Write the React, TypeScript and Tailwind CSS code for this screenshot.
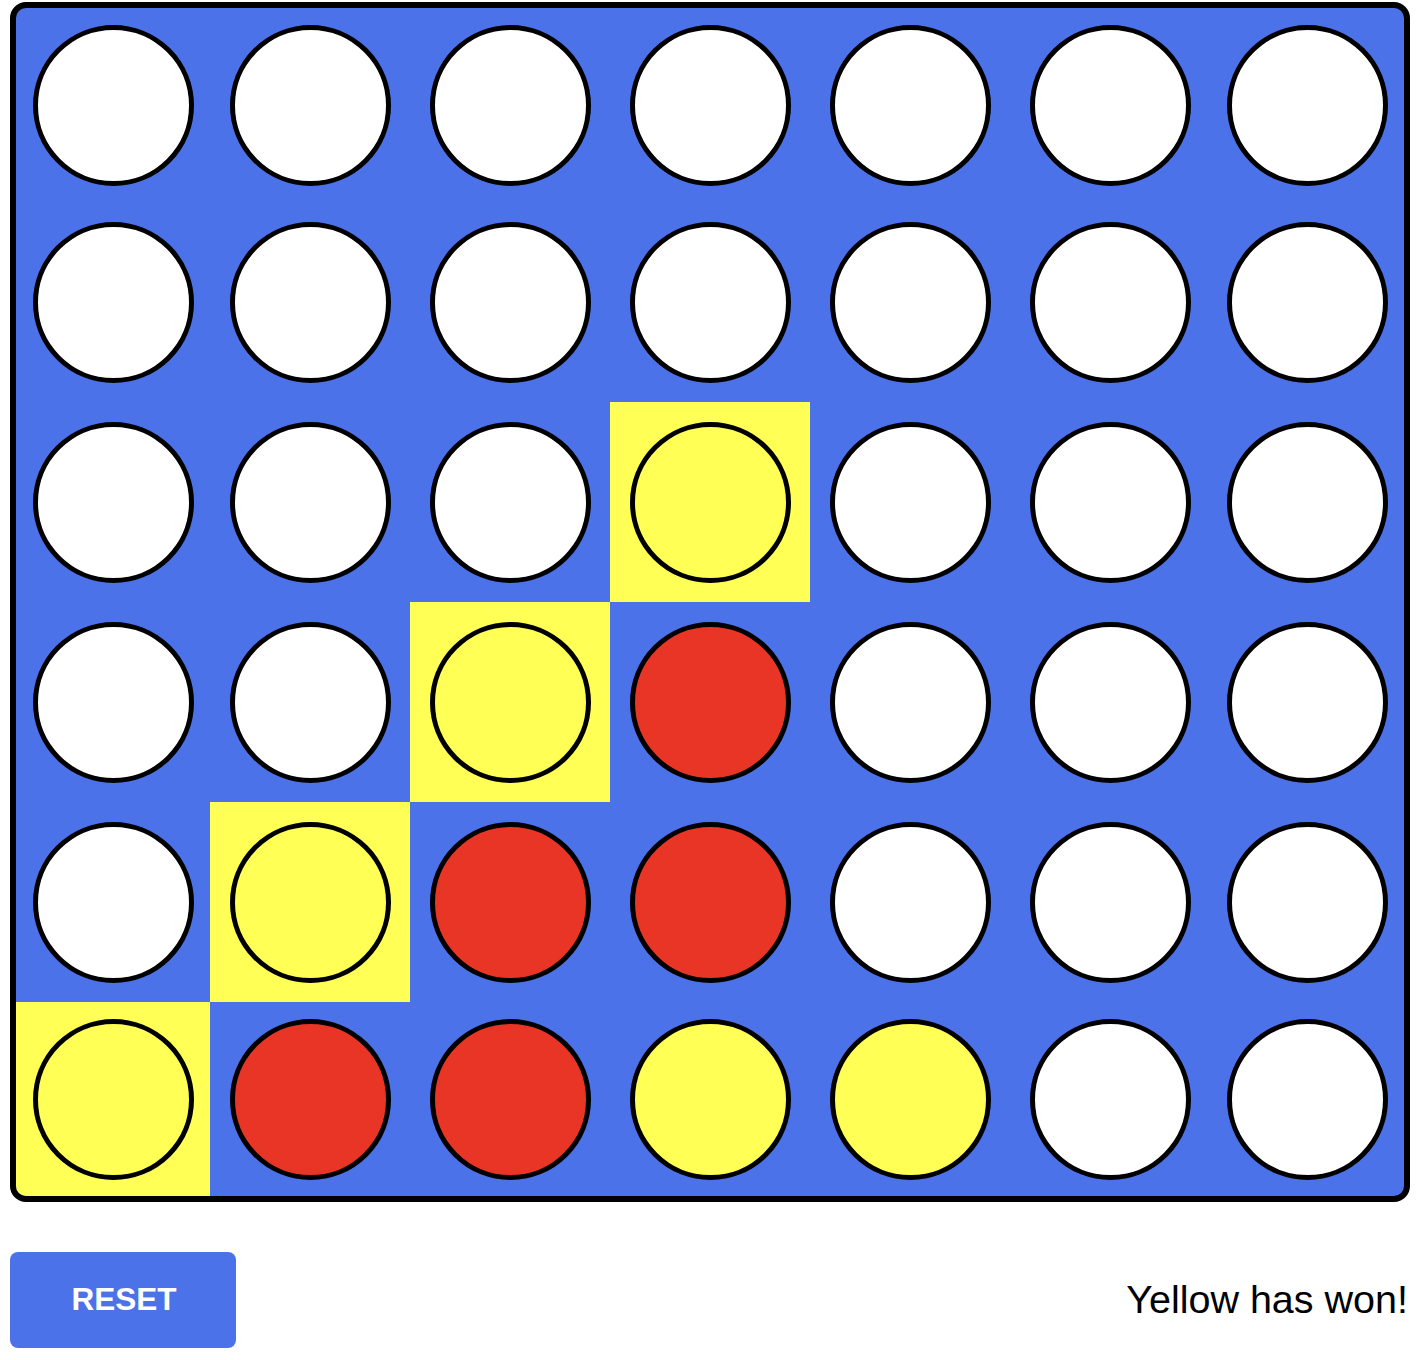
import React from "react";

type Cell = "E" | "Y" | "R";

const board: Cell[][] = [
  ["E", "E", "E", "E", "E", "E", "E"],
  ["E", "E", "E", "E", "E", "E", "E"],
  ["E", "E", "E", "Y", "E", "E", "E"],
  ["E", "E", "Y", "R", "E", "E", "E"],
  ["E", "Y", "R", "R", "E", "E", "E"],
  ["Y", "R", "R", "Y", "Y", "E", "E"],
];

const winning = new Set(["2-3", "3-2", "4-1", "5-0"]);

function Disc({ c }: { c: Cell }) {
  const fill =
    c === "Y" ? "bg-[#ffff55]" : c === "R" ? "bg-[#e83526]" : "bg-white";
  return (
    <div
      className={`w-[161px] h-[161px] shrink-0 rounded-full border-[5px] border-black ${fill}`}
    />
  );
}

export default function App() {
  return (
    <div
      className="w-[1418px] h-[1360px] bg-white pl-[10px] pt-[2px]"
      style={{ fontFamily: '"Liberation Sans", Arial, sans-serif' }}
    >
      <div className="w-[1400px] h-[1200px] border-[6px] border-black rounded-[16px] overflow-hidden bg-[#4b72e8] grid grid-cols-[194px_200px_200px_200px_200px_200px_194px] grid-rows-[194px_200px_200px_200px_200px_194px]">
        {board.map((row, r) =>
          row.map((c, col) => (
            <div
              key={`${r}-${col}`}
              className={`flex items-center justify-center ${
                winning.has(`${r}-${col}`) ? "bg-[#ffff55]" : ""
              }`}
            >
              <Disc c={c} />
            </div>
          ))
        )}
      </div>
      <div className="w-[1400px] mt-[50px] flex items-center justify-between">
        <button className="w-[226px] h-[96px] rounded-[8px] bg-[#4b72e8] text-white font-bold text-[31.5px] leading-none pl-[2px]">
          RESET
        </button>
        <div className="text-[39.5px] leading-none text-black pr-[2px]">
          Yellow has won!
        </div>
      </div>
    </div>
  );
}
